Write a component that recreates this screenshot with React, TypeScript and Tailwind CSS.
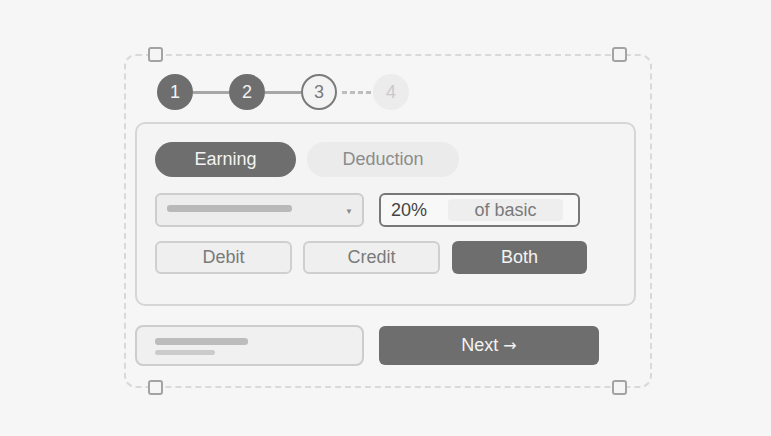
import { ReactNode } from "react";

const Handle = ({ pos }: { pos: string }) => (
  <div
    className={`absolute w-[15px] h-[15px] rounded-[3px] border-2 border-[#a3a3a3] bg-[#f5f5f5] ${pos}`}
  />
);

const Step = ({ n, state }: { n: number; state: "done" | "current" | "todo" }) => {
  const cls =
    state === "done"
      ? "bg-[#6e6e6e] text-[#f3f3f3]"
      : state === "current"
      ? "bg-[#f3f3f3] border-2 border-[#7a7a7a] text-[#7a7a7a]"
      : "bg-[#ececec] text-[#c9c9c9]";
  return (
    <div className={`w-[36px] h-[36px] rounded-full flex items-center justify-center text-[18px] ${cls}`}>
      {n}
    </div>
  );
};

const Toggle = ({ children, active, w }: { children: ReactNode; active?: boolean; w: string }) => (
  <div
    className={`${w} h-[33px] rounded-[6px] flex items-center justify-center text-[18px] ${
      active ? "bg-[#6e6e6e] text-[#f3f3f3]" : "bg-[#efefef] border-2 border-[#cfcfcf] text-[#7a7a7a]"
    }`}
  >
    {children}
  </div>
);

export default function App() {
  return (
    <div
      className="w-[771px] h-[436px] bg-[#f6f6f6] pt-[54px] pl-[124px]"
      style={{ fontFamily: '"Liberation Sans", Arial, sans-serif' }}
    >
      <div className="relative w-[528px] h-[334px] border-2 border-dashed border-[#d9d9d9] rounded-[12px] pl-[9px] pt-[18px]">
        <Handle pos="left-[22px] -top-[9px]" />
        <Handle pos="left-[486px] -top-[9px]" />
        <Handle pos="left-[22px] -bottom-[9px]" />
        <Handle pos="left-[486px] -bottom-[9px]" />

        {/* stepper */}
        <div className="flex items-center ml-[22px]">
          <Step n={1} state="done" />
          <div className="w-[36px] h-[3px] bg-[#a6a6a6]" />
          <Step n={2} state="done" />
          <div className="w-[36px] h-[3px] bg-[#a6a6a6]" />
          <Step n={3} state="current" />
          <div className="w-[36px] flex gap-[3px] pl-[5px]">
            <div className="w-[5px] h-[3px] bg-[#bdbdbd]" />
            <div className="w-[5px] h-[3px] bg-[#bdbdbd]" />
            <div className="w-[5px] h-[3px] bg-[#bdbdbd]" />
            <div className="w-[5px] h-[3px] bg-[#bdbdbd]" />
          </div>
          <Step n={4} state="todo" />
        </div>

        {/* card */}
        <div className="mt-[12px] w-[501px] h-[184px] border-2 border-[#d6d6d6] rounded-[10px] bg-[#f4f4f4] pl-[18px] pt-[18px] flex flex-col">
          <div className="flex gap-[11px]">
            <div className="w-[141px] h-[35px] rounded-full bg-[#6e6e6e] text-[#f3f3f3] flex items-center justify-center text-[18px]">
              Earning
            </div>
            <div className="w-[152px] h-[35px] rounded-full bg-[#ebebeb] text-[#8c8c8c] flex items-center justify-center text-[18px]">
              Deduction
            </div>
          </div>

          <div className="flex gap-[15px] mt-[16px]">
            <div className="w-[209px] h-[34px] rounded-[6px] border-2 border-[#cdcdcd] bg-[#ededed] flex items-center pl-[10px] pr-[9px]">
              <div className="w-[125px] h-[7px] rounded-[3px] bg-[#b9b9b9] -mt-[4px]" />
              <span className="ml-auto text-[8px] text-[#8a8a8a] mt-[4px]">▼</span>
            </div>
            <div className="w-[201px] h-[34px] rounded-[6px] border-2 border-[#787878] bg-[#f8f8f8] flex items-center pl-[10px]">
              <span className="text-[18px] text-[#444]">20%</span>
              <div className="ml-[21px] w-[115px] h-[22px] rounded-[4px] bg-[#eeeeee] text-[#7a7a7a] text-[18px] flex items-center justify-center">
                of basic
              </div>
            </div>
          </div>

          <div className="flex mt-[14px]">
            <Toggle w="w-[137px]">Debit</Toggle>
            <div className="w-[11px]" />
            <Toggle w="w-[137px]">Credit</Toggle>
            <div className="w-[12px]" />
            <Toggle w="w-[135px]" active>
              Both
            </Toggle>
          </div>
        </div>

        {/* footer */}
        <div className="flex items-start gap-[15px] mt-[19px]">
          <div className="w-[229px] h-[41px] rounded-[8px] border-2 border-[#cdcdcd] bg-[#f0f0f0] pl-[18px] pt-[11px] flex flex-col gap-[5px]">
            <div className="w-[93px] h-[7px] rounded-[3px] bg-[#bcbcbc]" />
            <div className="w-[60px] h-[5px] rounded-full bg-[#cbcbcb]" />
          </div>
          <div className="mt-[1px] w-[220px] h-[39px] rounded-[6px] bg-[#6e6e6e] text-[#f3f3f3] text-[18px] flex items-center justify-center gap-[5px]">
            <span>Next</span>
            <span className="text-[16px]" style={{ fontFamily: '"DejaVu Sans", sans-serif' }}>
              →
            </span>
          </div>
        </div>
      </div>
    </div>
  );
}
